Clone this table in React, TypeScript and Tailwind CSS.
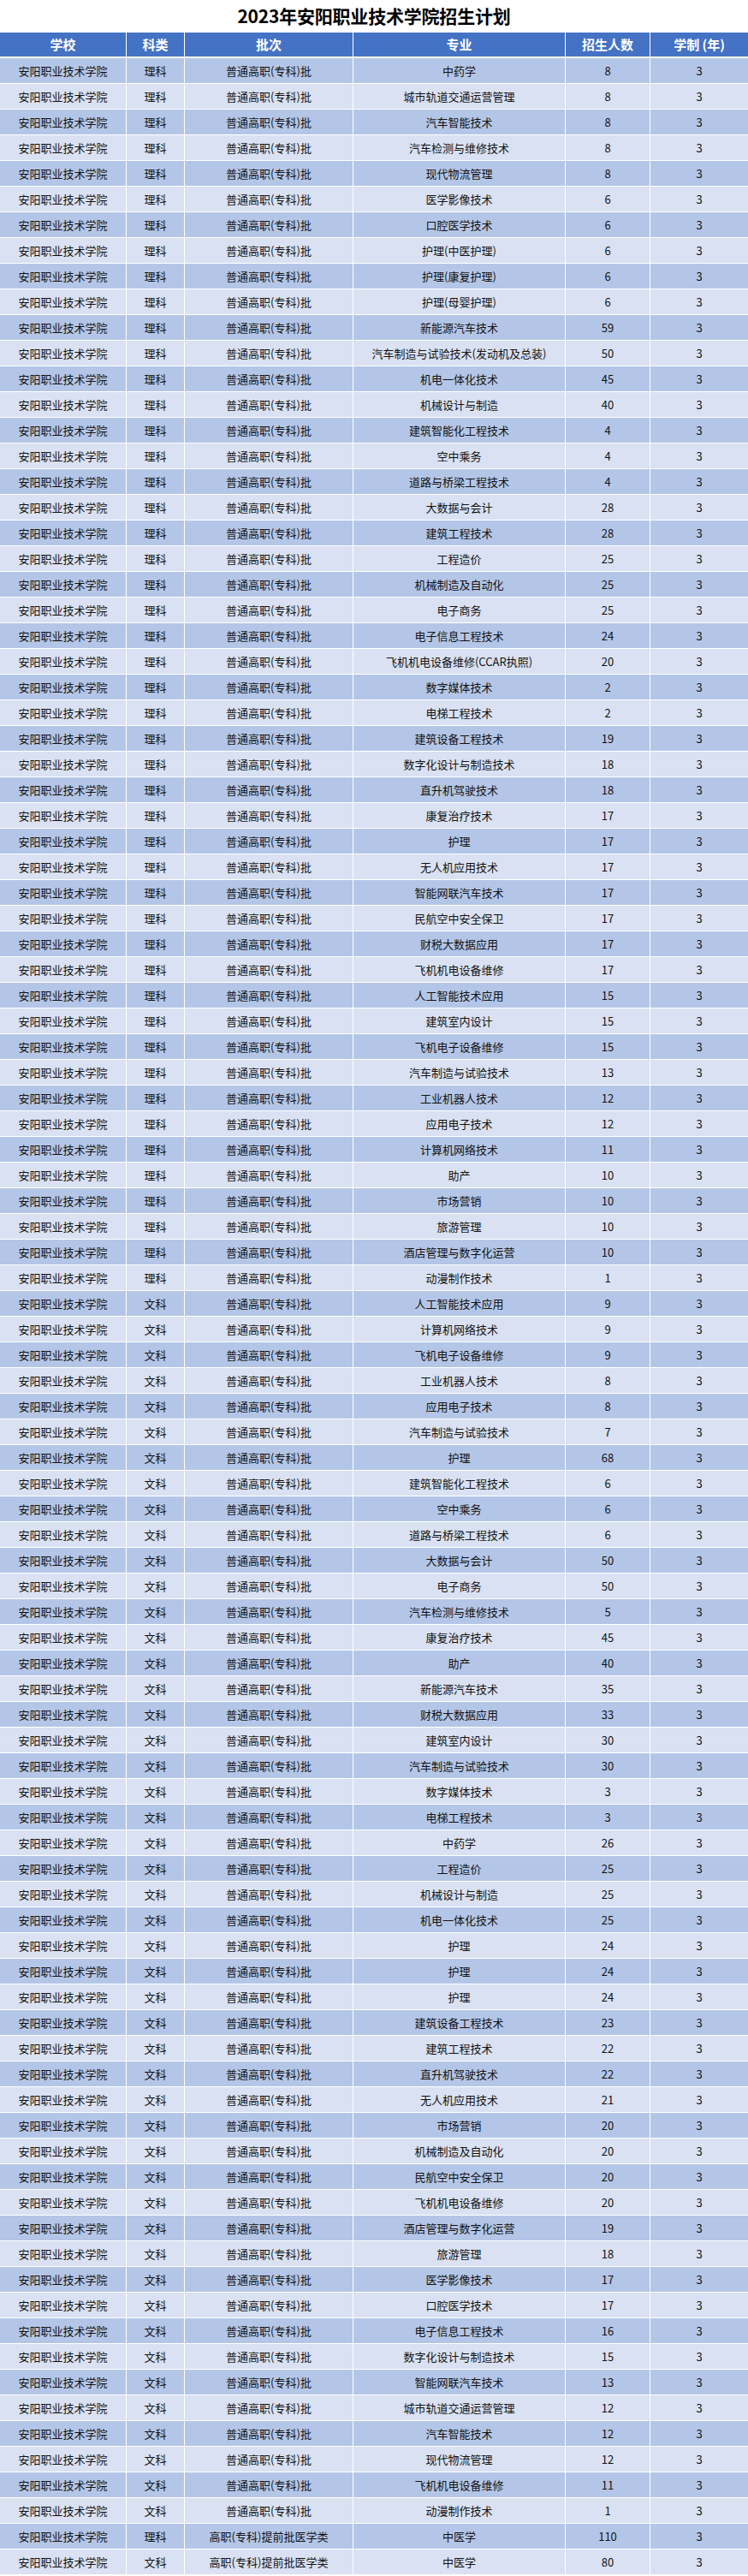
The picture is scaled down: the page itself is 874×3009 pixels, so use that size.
import React from "react";

type Row = [string, string, string, number];

const P = "普通高职(专科)批";
const Q = "高职(专科)提前批医学类";
const L = "理科";
const W = "文科";

const rows: Row[] = [
  [L, P, "中药学", 8],
  [L, P, "城市轨道交通运营管理", 8],
  [L, P, "汽车智能技术", 8],
  [L, P, "汽车检测与维修技术", 8],
  [L, P, "现代物流管理", 8],
  [L, P, "医学影像技术", 6],
  [L, P, "口腔医学技术", 6],
  [L, P, "护理(中医护理)", 6],
  [L, P, "护理(康复护理)", 6],
  [L, P, "护理(母婴护理)", 6],
  [L, P, "新能源汽车技术", 59],
  [L, P, "汽车制造与试验技术(发动机及总装)", 50],
  [L, P, "机电一体化技术", 45],
  [L, P, "机械设计与制造", 40],
  [L, P, "建筑智能化工程技术", 4],
  [L, P, "空中乘务", 4],
  [L, P, "道路与桥梁工程技术", 4],
  [L, P, "大数据与会计", 28],
  [L, P, "建筑工程技术", 28],
  [L, P, "工程造价", 25],
  [L, P, "机械制造及自动化", 25],
  [L, P, "电子商务", 25],
  [L, P, "电子信息工程技术", 24],
  [L, P, "飞机机电设备维修(CCAR执照)", 20],
  [L, P, "数字媒体技术", 2],
  [L, P, "电梯工程技术", 2],
  [L, P, "建筑设备工程技术", 19],
  [L, P, "数字化设计与制造技术", 18],
  [L, P, "直升机驾驶技术", 18],
  [L, P, "康复治疗技术", 17],
  [L, P, "护理", 17],
  [L, P, "无人机应用技术", 17],
  [L, P, "智能网联汽车技术", 17],
  [L, P, "民航空中安全保卫", 17],
  [L, P, "财税大数据应用", 17],
  [L, P, "飞机机电设备维修", 17],
  [L, P, "人工智能技术应用", 15],
  [L, P, "建筑室内设计", 15],
  [L, P, "飞机电子设备维修", 15],
  [L, P, "汽车制造与试验技术", 13],
  [L, P, "工业机器人技术", 12],
  [L, P, "应用电子技术", 12],
  [L, P, "计算机网络技术", 11],
  [L, P, "助产", 10],
  [L, P, "市场营销", 10],
  [L, P, "旅游管理", 10],
  [L, P, "酒店管理与数字化运营", 10],
  [L, P, "动漫制作技术", 1],
  [W, P, "人工智能技术应用", 9],
  [W, P, "计算机网络技术", 9],
  [W, P, "飞机电子设备维修", 9],
  [W, P, "工业机器人技术", 8],
  [W, P, "应用电子技术", 8],
  [W, P, "汽车制造与试验技术", 7],
  [W, P, "护理", 68],
  [W, P, "建筑智能化工程技术", 6],
  [W, P, "空中乘务", 6],
  [W, P, "道路与桥梁工程技术", 6],
  [W, P, "大数据与会计", 50],
  [W, P, "电子商务", 50],
  [W, P, "汽车检测与维修技术", 5],
  [W, P, "康复治疗技术", 45],
  [W, P, "助产", 40],
  [W, P, "新能源汽车技术", 35],
  [W, P, "财税大数据应用", 33],
  [W, P, "建筑室内设计", 30],
  [W, P, "汽车制造与试验技术", 30],
  [W, P, "数字媒体技术", 3],
  [W, P, "电梯工程技术", 3],
  [W, P, "中药学", 26],
  [W, P, "工程造价", 25],
  [W, P, "机械设计与制造", 25],
  [W, P, "机电一体化技术", 25],
  [W, P, "护理", 24],
  [W, P, "护理", 24],
  [W, P, "护理", 24],
  [W, P, "建筑设备工程技术", 23],
  [W, P, "建筑工程技术", 22],
  [W, P, "直升机驾驶技术", 22],
  [W, P, "无人机应用技术", 21],
  [W, P, "市场营销", 20],
  [W, P, "机械制造及自动化", 20],
  [W, P, "民航空中安全保卫", 20],
  [W, P, "飞机机电设备维修", 20],
  [W, P, "酒店管理与数字化运营", 19],
  [W, P, "旅游管理", 18],
  [W, P, "医学影像技术", 17],
  [W, P, "口腔医学技术", 17],
  [W, P, "电子信息工程技术", 16],
  [W, P, "数字化设计与制造技术", 15],
  [W, P, "智能网联汽车技术", 13],
  [W, P, "城市轨道交通运营管理", 12],
  [W, P, "汽车智能技术", 12],
  [W, P, "现代物流管理", 12],
  [W, P, "飞机机电设备维修", 11],
  [W, P, "动漫制作技术", 1],
  [L, Q, "中医学", 110],
  [W, Q, "中医学", 80],
];

const cols = "grid grid-cols-[148px_68px_197px_248px_99px_114px]";
const cell = "flex items-center justify-center border-r border-white last:border-r-0 whitespace-nowrap";

export default function App() {
  return (
    <div
      className="w-[874px] bg-white text-[#111]"
      style={{ fontFamily: '"Noto Sans CJK SC", "Noto Sans", sans-serif' }}
    >
      <div className="h-[38px] flex items-center justify-center text-[21px] font-bold text-black tracking-[-0.2px]">
        2023年安阳职业技术学院招生计划
      </div>
      <div className={`${cols} h-[30px] bg-[#4472C4] border-b-2 border-white text-white text-[15px] font-semibold`}>
        <div className={cell}>学校</div>
        <div className={cell}>科类</div>
        <div className={cell}>批次</div>
        <div className={cell}>专业</div>
        <div className={cell}>招生人数</div>
        <div className={cell}>学制 (年)</div>
      </div>
      {rows.map((r, i) => (
        <div
          key={i}
          className={`${cols} h-[30px] border-b border-white text-[13px] ${
            i % 2 === 0 ? "bg-[#B4C6E7]" : "bg-[#D9E1F2]"
          }`}
        >
          <div className={cell}>安阳职业技术学院</div>
          <div className={cell}>{r[0]}</div>
          <div className={cell}>{r[1]}</div>
          <div className={cell}>{r[2]}</div>
          <div className={cell}>{r[3]}</div>
          <div className={cell}>3</div>
        </div>
      ))}
    </div>
  );
}
